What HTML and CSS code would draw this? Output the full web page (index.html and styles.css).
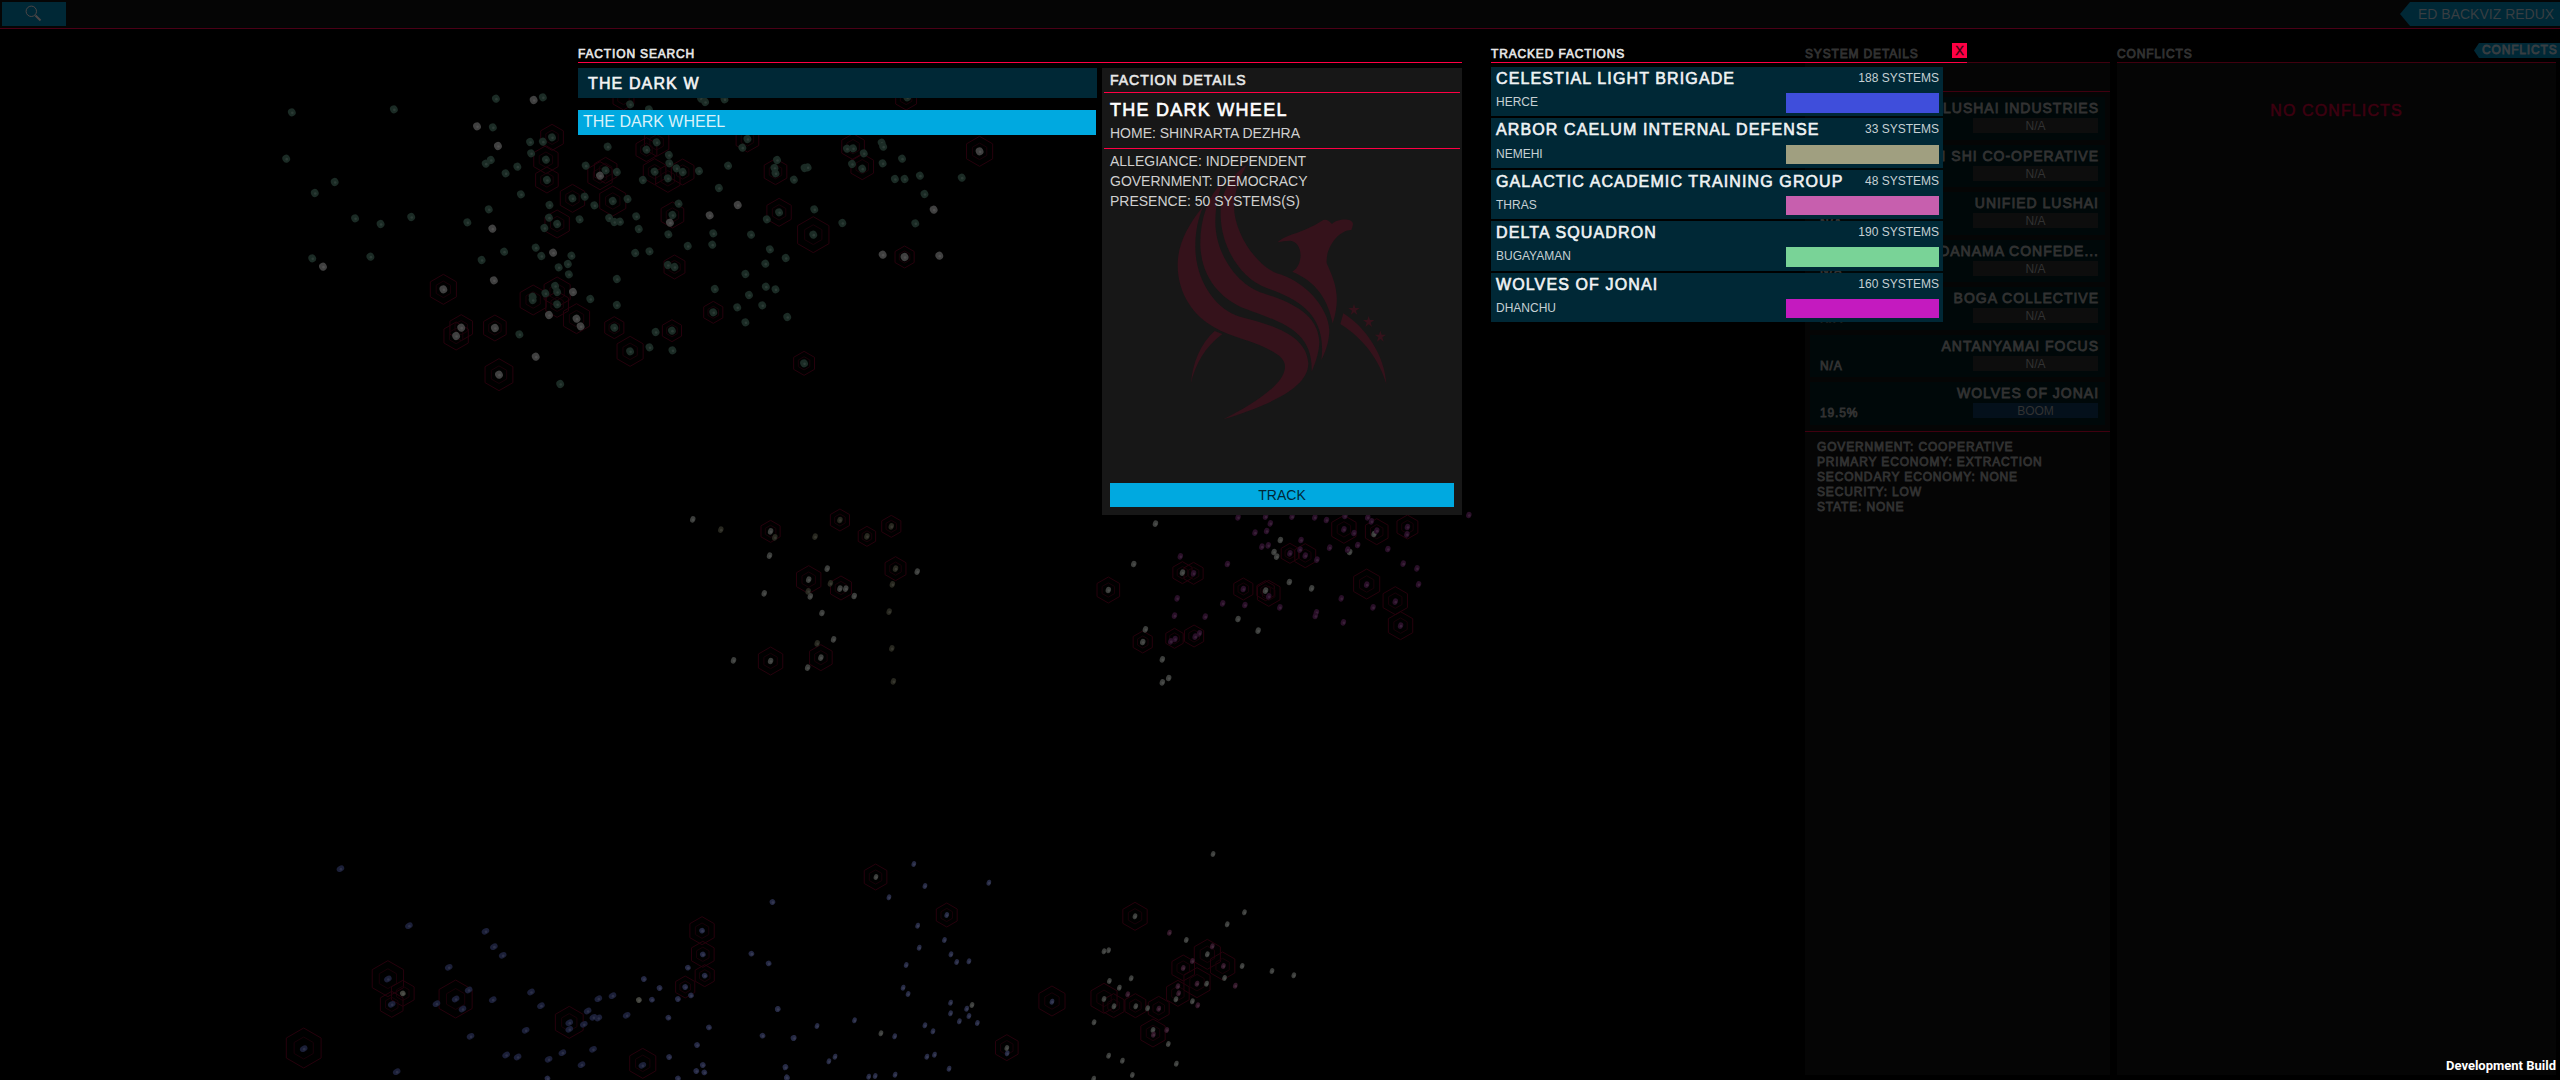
FILE: index.html
```html
<!DOCTYPE html>
<html lang="en">
<head>
<meta charset="utf-8">
<title>ED BackViz Redux</title>
<link rel="stylesheet" href="styles.css">
</head>
<body>
<svg class="starmap" id="starmap" viewBox="0 0 2560 1080" aria-hidden="true"></svg>

<div class="app">
  <header class="topbar">
    <button class="search-btn" aria-label="Search">
      <svg viewBox="0 0 18 18" width="18" height="18"><circle cx="6.3" cy="6.3" r="5.2"/><path class="handle" d="M10.5 10.5 15.5 15.5"/></svg>
    </button>
    <div class="brand">ED BACKVIZ REDUX</div>
  </header>
  <main class="columns">
    <section class="column system">
      <h2 class="heading dim">SYSTEM DETAILS</h2>
      <div class="system-body">
        <div class="system-name"></div>
        <ul class="influences">
          <li><span class="pct"></span><span class="name">LUSHAI INDUSTRIES</span><span class="state">N/A</span></li>
          <li><span class="pct"></span><span class="name">I SHI CO-OPERATIVE</span><span class="state">N/A</span></li>
          <li><span class="pct">N/A</span><span class="name">UNIFIED LUSHAI</span><span class="state">N/A</span></li>
          <li><span class="pct">N/A</span><span class="name">DANAMA CONFEDE...</span><span class="state">N/A</span></li>
          <li><span class="pct">N/A</span><span class="name">BOGA COLLECTIVE</span><span class="state">N/A</span></li>
          <li><span class="pct">N/A</span><span class="name">ANTANYAMAI FOCUS</span><span class="state">N/A</span></li>
          <li><span class="pct">19.5%</span><span class="name">WOLVES OF JONAI</span><span class="state boom">BOOM</span></li>
        </ul>
        <div class="facts">
          <div>GOVERNMENT: COOPERATIVE</div>
          <div>PRIMARY ECONOMY: EXTRACTION</div>
          <div>SECONDARY ECONOMY: NONE</div>
          <div>SECURITY: LOW</div>
          <div>STATE: NONE</div>
        </div>
      </div>
    </section>
    <section class="column conflicts">
      <h2 class="heading dim">CONFLICTS</h2>
      <div class="conflicts-body">NO CONFLICTS</div>
    </section>
  </main>
  <div class="conflicts-tab">CONFLICTS</div>
</div>

<div class="overlay">
  <section class="search">
    <h2 class="heading">FACTION SEARCH</h2>
    <div class="search-body">
      <div class="finder">
        <div class="query">THE DARK W</div>
        <div class="result">THE DARK WHEEL</div>
      </div>
      <article class="details">
        <svg class="emblem" viewBox="36 114 1080 1341" aria-hidden="true">
          <path d="M340 528C290 590 263 645 263 705C263 790 310 858 375 893C420 918 470 928 510 946C560 968 585 985 585 1010C585 1065 480 1128 400 1168C520 1130 655 1080 655 1000C650 920 560 888 450 860C380 840 316 755 316 650C316 605 324 565 340 528Z"/>
          <path d="M402 450C352 500 330 570 331 645C334 750 400 812 470 838C570 876 670 900 665 1025C680 990 688 960 688 935C684 850 600 815 520 790C440 765 376 670 376 575C377 525 385 488 402 450Z"/>
          <path d="M475 400C420 440 390 490 392 560C395 650 450 745 530 774C620 806 712 850 694 990C712 955 718 925 718 900C714 830 640 750 560 730C490 700 432 600 432 530C435 480 450 435 475 400Z"/>
          <path d="M563 637C590 610 630 615 700 570Q712 566 726 582C740 566 788 562 789 582Q788 592 784 600C745 600 706 655 710 700C735 755 754 800 728 880C714 810 680 755 607 725C642 705 640 635 600 632Q580 632 563 637Z"/>
          <path d="M374 903 397 912C345 950 315 1005 303 1060C307 1000 332 940 374 903Z"/>
          <path d="M760 850 751 882C820 925 868 990 889 1062C884 975 825 890 760 850Z"/>
          <path id="pip" d="M792 822 796 834 809 834 798 842 802 855 792 847 782 855 786 842 775 834 788 834Z"/>
          <use href="#pip" x="44" y="36"/><use href="#pip" x="79" y="80"/>
        </svg>
        <h3 class="details-heading">FACTION DETAILS</h3>
        <div class="details-title">
          <h4>THE DARK WHEEL</h4>
          <p>HOME: SHINRARTA DEZHRA</p>
        </div>
        <div class="details-facts">
          <p>ALLEGIANCE: INDEPENDENT</p>
          <p>GOVERNMENT: DEMOCRACY</p>
          <p>PRESENCE: 50 SYSTEMS(S)</p>
        </div>
        <button class="track">TRACK</button>
      </article>
    </div>
  </section>
  <section class="tracked">
    <div class="tracked-head"><h2 class="heading">TRACKED FACTIONS</h2><button class="close">X</button></div>
    <ul class="factions">
      <li><h3>CELESTIAL LIGHT BRIGADE</h3><span>188 SYSTEMS</span><p>HERCE</p><i class="swatch blue"></i></li>
      <li><h3>ARBOR CAELUM INTERNAL DEFENSE</h3><span>33 SYSTEMS</span><p>NEMEHI</p><i class="swatch sand"></i></li>
      <li><h3>GALACTIC ACADEMIC TRAINING GROUP</h3><span>48 SYSTEMS</span><p>THRAS</p><i class="swatch pink"></i></li>
      <li><h3>DELTA SQUADRON</h3><span>190 SYSTEMS</span><p>BUGAYAMAN</p><i class="swatch green"></i></li>
      <li><h3>WOLVES OF JONAI</h3><span>160 SYSTEMS</span><p>DHANCHU</p><i class="swatch magenta"></i></li>
    </ul>
  </section>
</div>
<div class="build-tag">Development Build</div>
<script src="starmap.js"></script>
</body>
</html>
```
FILE: styles.css
```css
* { box-sizing: border-box; margin: 0; padding: 0; }
body {
  width: 2560px; height: 1080px; overflow: hidden; position: relative;
  background: #000; color: #e8e8e8;
  font-family: "Liberation Sans", Arial, sans-serif; font-size: 12px;
  font-kerning: normal;
}
ul { list-style: none; }
button { border: 0; font: inherit; color: inherit; }
h2, h3, h4 { font-weight: 400; }

.starmap { position: absolute; inset: 0; width: 2560px; height: 1080px; }
.starmap .hex { fill: none; stroke: #26000c; stroke-width: 1; }
.starmap .hex.faint { stroke: #180008; }
.starmap .glint { fill: #fff; opacity: .08; }

.heading, .name, .pct, .facts, .conflicts-body, .conflicts-tab, .query,
.details-heading, .details-title h4, .factions h3 {
  letter-spacing: .07em; -webkit-text-stroke: .6px currentColor;
}
.heading { font-size: 12px; line-height: 14px; padding: 18px 0 1px; height: 33px; }
.heading.dim, .name, .pct, .facts, .conflicts-tab { -webkit-text-stroke-width: .8px; }
.dim { color: #323232; }

/* dimmed application layer */
.app { position: relative; height: 1080px; display: flex; flex-direction: column; }
.topbar {
  height: 29px; flex: none; padding: 2px 0; display: flex; justify-content: space-between; align-items: flex-start;
  background: #050505; border-bottom: 1px solid #4a0016;
}
.search-btn { width: 64px; height: 24px; margin-left: 2px; background: #002836; display: grid; place-items: center; }
.search-btn svg { fill: none; stroke: #4c4646; stroke-width: 1; }
.search-btn .handle { stroke-width: 2; }
.brand {
  width: 160px; height: 24px; padding-left: 18px; background: #002836; color: #383e42;
  font-size: 14px; line-height: 24px; white-space: nowrap; font-kerning: none;
  clip-path: polygon(10px 0, 100% 0, 100% 100%, 10px 100%, 0 50%);
}
.columns { height: 1046px; display: flex; justify-content: flex-end; gap: 7px; padding-right: 4px; }
.column { display: flex; flex-direction: column; }
.system { width: 305px; }
.conflicts { width: 439px; }
.system-body, .conflicts-body { flex: 1; background: #050505; border-top: 1px solid #40000f; }
.system-name { height: 29px; border-bottom: 1px solid #40000f; }
.influences { padding: 5px 5px 5.5px; display: flex; flex-direction: column; gap: 5px; height: 340px; border-bottom: 1px solid #40000f; }
.influences li {
  height: 42.5px; background: #000809; padding: 3px 7px 0 10px; color: #323232;
  display: grid; grid-template-columns: 1fr 125px; grid-template-rows: 18px 15px;
}
.influences .name { grid-column: 1 / 3; grid-row: 1; justify-self: end; font-size: 14px; line-height: 16px; white-space: nowrap; margin-right: -1px; }
.influences .pct { grid-column: 1; grid-row: 2; line-height: 20px; }
.influences .state { grid-column: 2; grid-row: 2; background: #0d0d0d; text-align: center; line-height: 16px; }
.influences .boom { background: #04101b; }
.facts { padding: 8px 12px; color: #323232; line-height: 15px; }
.conflicts-body { padding-top: 39px; text-align: center; font-size: 16px; line-height: 18px; color: #3d0010; }
.conflicts-tab {
  position: absolute; right: 0; top: 43px; width: 86px; height: 15px; padding-left: 8px;
  background: #002836; color: #383e42; line-height: 15px;
  clip-path: polygon(5px 0, 100% 0, 100% 100%, 5px 100%, 0 50%);
}

/* foreground dialogs */
.overlay { position: absolute; left: 578px; top: 29px; display: flex; align-items: flex-start; gap: 29px; }
.search { width: 884px; }
.search-body { border-top: 1px solid #ff0044; padding-top: 5px; display: flex; gap: 5px; }
.finder { width: 519px; display: flex; flex-direction: column; gap: 12px; }
.query { height: 30px; background: #002836; padding-left: 10px; font-size: 16px; line-height: 32px; color: #f4f4f4; }
.result { height: 25px; width: 518px; background: #00a9e0; padding-left: 5px; font-size: 16px; line-height: 24px; color: #d9f2fa; }
.details {
  position: relative; width: 360px; height: 447px; background: #171717; padding: 0 2px 8px;
  display: flex; flex-direction: column; color: #d0d0d0; font-size: 14px;
}
.emblem { position: absolute; inset: 0; width: 360px; height: 447px; fill: #35121b; }
.details-heading, .details-title, .details-facts, .track { position: relative; }
.details-heading { height: 25px; border-bottom: 1px solid #ff0044; padding-left: 6px; font-size: 14px; line-height: 25px; color: #e8e8e8; }
.details-title { height: 56px; border-bottom: 1px solid #ff0044; padding: 6px 6px 0; }
.details-title h4 { font-size: 18px; line-height: 22px; color: #fff; }
.details-title p { line-height: 20px; padding-top: 2px; }
.details-facts { padding: 2px 6px; line-height: 20px; }
.track { margin: auto 6px 0; height: 24px; background: #00a9e0; color: #002836; font-size: 14px; line-height: 24px; }

.tracked { width: 476px; }
.tracked-head { display: flex; justify-content: space-between; border-bottom: 1px solid #ff0044; }
.close { width: 15px; height: 15px; margin-top: 14px; background: #ff0044; color: #33000e; font-size: 13px; line-height: 15px; -webkit-text-stroke: .3px currentColor; }
.factions { width: 452px; padding-top: 4px; display: grid; grid-auto-rows: 49.4px; row-gap: 2px; }
.factions li {
  background: #002836; padding: 2px 4px 0 5px; display: grid; white-space: nowrap;
  grid-template-columns: minmax(0, 1fr) 153px; grid-template-rows: 24.2px 19.4px;
}
.factions h3 { grid-area: 1 / 1; font-size: 16px; line-height: 19px; color: #f0f3f4; }
.factions span { grid-area: 1 / 2; justify-self: end; line-height: 19px; color: #c6d0d4; }
.factions p { grid-area: 2 / 1; line-height: 19.4px; color: #c6d0d4; }
.swatch { grid-area: 2 / 2; }
.blue { background: #3f4edb; }
.sand { background: #a09f80; }
.pink { background: #c75fae; }
.green { background: #79d397; }
.magenta { background: #c41abf; }

.build-tag {
  position: absolute; right: 4px; bottom: 6px; color: #fff;
  font: 700 13px/16px Roboto, "Noto Sans", sans-serif;
}
```
FILE: starmap.js
```js
// Each sector keeps its own local units; origin and scale place it on the map.
const sectors = [
  { ox: 250, oy: 80, sx: 1.96, sy: 3, rx: 3.8, ry: 4, tilt: -30,
    stars: {
      '#1b2b25': '82,97 282,88 482,56 574,52 476,142 71,236 166,306 127,339 206,415 256,432 316,411 426,427 122,535 236,530 498,515 454,540 462,251 472,240 501,280 524,260 549,186 574,185 592,172 551,220 580,239 582,300 531,343 468,388 587,375 632,355 656,350 675,376 711,363 740,357 586,413 602,432 577,444 646,418 704,414 714,426 725,425 757,409 762,447 560,503 571,528 630,527 605,562 623,552 625,583 598,618 579,640 602,636 554,650 554,660 602,673 667,657 719,597 719,675 714,743 745,814 783,802 795,756 827,752 828,811 608,912 528,763 701,200 745,73 797,187 777,209 821,225 822,250 836,265 848,276 880,273 793,275 819,295 770,300 697,271 719,276 658,257 840,371 828,405 820,463 858,498 783,514 755,519 819,555 832,561 906,494 908,460 982,464 937,257 919,324 965,203 975,177 1033,240 1028,264 1030,280 1066,299 1087,264 1093,262 1037,397 1013,418 1106,388 1104,464 1161,429 1170,206 1182,205 1203,220 1180,252 1200,266 1240,250 1238,188 1241,200 1278,236 1264,297 1283,297 1313,287 1322,342 1395,293 1304,430 1019,508 1010,551 1050,534 971,582 911,627 978,645 1011,620 1030,628 955,682 1004,676 908,697 971,727 1053,711 1086,850 884,56 892,66 930,58 782,88 1288,52',
      '#404040': '556,60 445,139 486,198 475,446 143,560 594,518 478,601 379,628 633,636 586,705 640,716 648,739 414,743 404,768 480,744 560,830 488,884 686,287 823,428 956,375 901,406 1340,389 1240,524 1283,531 1351,527 1430,214' },
    hexes: '592,172,13 580,239,14 582,300,13 632,355,14 711,363,15 602,432,14 686,287,14 697,271,13 797,187,14 777,209,12 793,275,13 819,295,14 848,276,13 975,177,13 1030,275,13 1182,200,13 1200,260,13 1430,214,15 828,405,13 832,561,12 1037,397,14 1104,464,18 1283,531,11 379,628,15 555,660,15 602,636,15 602,673,13 640,716,15 714,743,11 827,752,11 745,814,15 908,697,11 1086,850,12 414,743,13 404,768,14 480,744,13 488,884,16 732,54,12 1286,54,12' },
  { ox: 670, oy: 480, sx: 1.889, sy: 3, rx: 2.6, ry: 3.3, tilt: 20,
    stars: {
      '#27271f': '96,149 198,172 274,170 321,120 418,139 372,169 426,266 420,313 303,310 261,334 414,395 419,505 422,604 278,490',
      '#3b3d3b': '43,118 190,154 188,227 297,266 262,299 265,349 178,340 287,399 321,326 332,326 348,348 467,275 309,478 285,533 190,543 120,541 260,563 917,131 876,252 828,330 968,278 1153,180 1141,216 1146,230 1170,306 1212,325 1125,332 1073,417 1111,452 898,448 893,486 930,538 942,594 930,607 1330,162 1284,216',
      '#290f28': '1073,112 1125,110 1134,130 1105,158 1127,153 1118,200 1130,196 1175,110 1218,112 1240,120 1275,108 1318,112 1325,124 1273,148 1292,159 1335,152 1393,141 1392,163 1299,195 1246,203 1280,209 1356,207 1192,180 1190,209 1171,220 1200,227 1222,239 1385,251 1411,265 1414,313 1316,314 1370,365 1380,437 1328,382 1268,355 1272,427 1221,397 1219,408 1152,382 1131,349 1083,327 1086,375 1044,370 1053,252 964,229 989,280 958,355 953,407 1011,410 1000,460 992,470 954,477 946,484 1509,105' },
    hexes: '190,154,11 321,120,11 418,139,11 372,169,10 262,299,14 323,324,12 426,266,12 285,533,13 190,543,14 828,330,13 968,278,11 989,280,11 1083,327,11 1125,332,10 1131,340,13 1171,220,10 1200,227,12 1273,148,14 1335,155,13 1393,141,12 1316,312,15 1370,362,14 1380,437,14 893,486,11 953,475,10 990,468,11' },
  { ox: 200, oy: 780, sx: 2.6133, sy: 3, rx: 4, ry: 2.9, tilt: -30,
    stars: {
      '#1b1f38': '367,266 546,437 746,454 768,500 791,526 650,562 702,630 668,657 686,687 618,671 765,659 491,597 501,673 271,806 514,875 707,769 865,636 891,677 851,751 800,825 830,831 911,838 947,818 997,854 1027,808 965,728 965,748 1003,733 1013,693 1041,714 1028,712 1041,656 1078,647 1115,706 1156,856' },
    hexes: '491,596,18 530,640,13 501,673,13 668,657,19 271,804,20 965,727,16 1157,850,15' },
  { ox: 200, oy: 780, sx: 2.6133, sy: 3, rx: 2.8, ry: 2.8, tilt: -30,
    stars: {
      '#242843': '1496,366 1441,521 1486,550 1312,452 1314,523 1319,587 1275,563 1268,621 1283,646 1249,657 1201,624 1181,659 1160,597 1224,713 1330,742 1299,795 1226,831 1314,855 1297,873 1318,877 1510,687 1470,767 1551,774 1530,861 1534,893 908,895 1249,895',
      '#42433d': '530,640 1147,660' },
    hexes: '1312,452,14 1314,523,13 1319,587,11 1268,621,11' },
  { ox: 760, oy: 800, sx: 2.6133, sy: 3, rx: 2.2, ry: 3, tilt: 20,
    stars: {
      '#262a44': '402,192 431,258 337,292 598,248 488,345 412,377 482,420 416,443 499,463 514,486 546,484 382,495 374,563 387,582 498,608 498,640 540,626 546,648 521,664 568,669 431,676 452,694 352,709 247,661 149,678 89,714 46,627 180,784 196,770 436,770 456,764 494,806 353,824 284,830 301,828 66,802 69,832 763,605 646,760',
      '#3b3d3b': '303,231 1184,162 980,349 1266,337 1221,373 1114,420 1169,463 1260,498 1338,513 1395,526 1214,534 1167,551 899,454 911,451 913,543 970,535 939,563 899,597 925,619 982,619 1013,625 873,667 1027,690 1067,732 1088,791 911,767 947,782 973,825 872,836 554,615 316,700 645,744 1130,604 1087,598',
      '#321729': '1070,398 1182,439 1130,483 1106,504 1211,498 1142,551 1092,559 1094,580 1242,557 1144,616 1042,626 1063,690 1028,704 961,583' },
    hexes: '302,231,13 488,345,12 980,349,14 763,603,15 645,743,13 899,595,15 924,617,12 981,617,12 1042,625,12 1027,699,14 1092,580,13 1106,504,13 1142,548,15 1169,463,15 1209,498,14' }
];

const svg = document.getElementById('starmap');
const add = (tag, attrs) => {
  const el = document.createElementNS('http://www.w3.org/2000/svg', tag);
  for (const key in attrs) el.setAttribute(key, attrs[key]);
  svg.appendChild(el);
};
const hexagon = (x, y, r) =>
  [[0, -1], [.87, -.5], [.87, .5], [0, 1], [-.87, .5], [-.87, -.5]]
    .map(([a, b]) => `${x + a * r},${y + b * r}`).join(' ');

for (const s of sectors) {
  const place = pair => {
    const [x, y, r] = pair.split(',').map(Number);
    return [s.ox + x / s.sx, s.oy + y / s.sy, r];
  };
  for (const pair of s.hexes.split(' ')) {
    const [x, y, r] = place(pair);
    add('polygon', { class: 'hex', points: hexagon(x, y, r) });
    add('polygon', { class: 'hex faint', points: hexagon(x, y, r * .55) });
  }
  for (const fill in s.stars) {
    for (const pair of s.stars[fill].split(' ')) {
      const [x, y] = place(pair);
      add('ellipse', { cx: x, cy: y, rx: s.rx, ry: s.ry, fill, transform: `rotate(${s.tilt} ${x} ${y})` });
      add('circle', { class: 'glint', cx: x + .5, cy: y + .5, r: 1.3 });
    }
  }
}
```
